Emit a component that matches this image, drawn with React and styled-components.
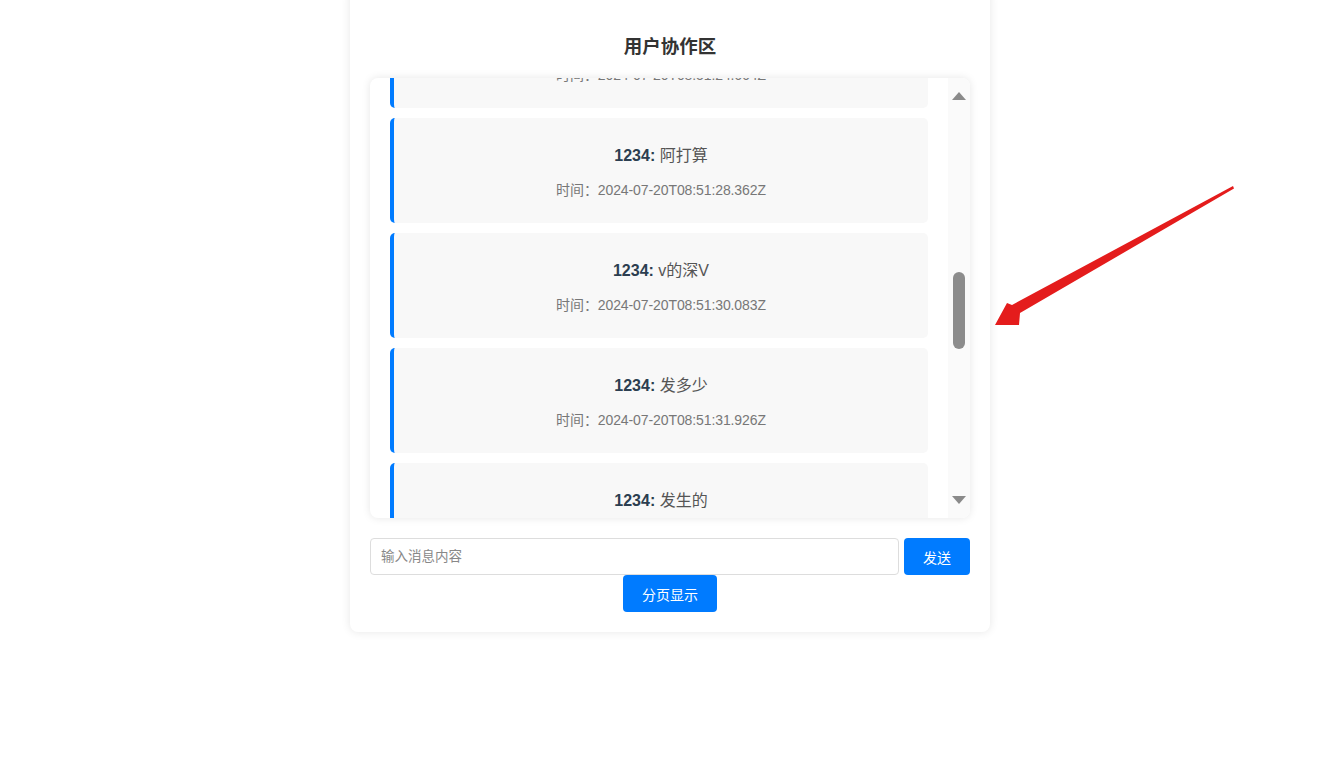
import React, { useLayoutEffect, useRef, useState } from 'react'
import styled, { createGlobalStyle } from 'styled-components'

const messages = [
  { user: '1234', text: '你好', time: '2024-07-20T08:50:41.118Z' },
  { user: '1234', text: '测试一下', time: '2024-07-20T08:50:47.532Z' },
  { user: '1234', text: '大家好', time: '2024-07-20T08:50:55.207Z' },
  { user: '1234', text: '收到', time: '2024-07-20T08:51:02.874Z' },
  { user: '1234', text: '的撒', time: '2024-07-20T08:51:10.391Z' },
  { user: '1234', text: '阿斯顿', time: '2024-07-20T08:51:16.045Z' },
  { user: '1234', text: '去问问', time: '2024-07-20T08:51:20.768Z' },
  { user: '1234', text: '撒旦', time: '2024-07-20T08:51:24.664Z' },
  { user: '1234', text: '阿打算', time: '2024-07-20T08:51:28.362Z' },
  { user: '1234', text: 'v的深V', time: '2024-07-20T08:51:30.083Z' },
  { user: '1234', text: '发多少', time: '2024-07-20T08:51:31.926Z' },
  { user: '1234', text: '发生的', time: '2024-07-20T08:51:33.517Z' },
  { user: '1234', text: '规范', time: '2024-07-20T08:51:35.240Z' },
  { user: '1234', text: '好几个', time: '2024-07-20T08:51:37.009Z' },
  { user: '1234', text: '看看', time: '2024-07-20T08:51:38.812Z' },
  { user: '1234', text: '而我却', time: '2024-07-20T08:51:40.455Z' },
  { user: '1234', text: '热热', time: '2024-07-20T08:51:42.193Z' },
  { user: '1234', text: '完成', time: '2024-07-20T08:51:44.730Z' },
]

const TRACK = 368

const App = () => {
  const listRef = useRef(null)
  const [thumb, setThumb] = useState({ top: 0, height: TRACK })

  const update = () => {
    const el = listRef.current
    if (!el) return
    const height = Math.max(30, (TRACK * el.clientHeight) / el.scrollHeight)
    const max = el.scrollHeight - el.clientHeight
    const top = max > 0 ? ((TRACK - height) * el.scrollTop) / max : 0
    setThumb({ top, height })
  }

  useLayoutEffect(() => {
    if (listRef.current) listRef.current.scrollTop = 900
    update()
  }, [])

  return (
    <>
      <GlobalStyle />
      <Page>
        <Card>
          <Title>用户协作区</Title>
          <ListFrame>
            <MessageList ref={listRef} onScroll={update}>
              {messages.map((m, i) => (
                <Message key={i}>
                  <MessageText>
                    <strong>{m.user}:</strong> {m.text}
                  </MessageText>
                  <MessageTime>时间：{m.time}</MessageTime>
                </Message>
              ))}
            </MessageList>
            <ScrollBar>
              <ScrollArrow>
                <svg width="14" height="8" viewBox="0 0 14 8">
                  <polygon points="7,0 14,8 0,8" fill="#8a8a8a" />
                </svg>
              </ScrollArrow>
              <ScrollTrack>
                <ScrollThumb style={{ top: thumb.top, height: thumb.height }} />
              </ScrollTrack>
              <ScrollArrow>
                <svg width="14" height="8" viewBox="0 0 14 8">
                  <polygon points="0,0 14,0 7,8" fill="#8a8a8a" />
                </svg>
              </ScrollArrow>
            </ScrollBar>
          </ListFrame>
          <InputRow>
            <MessageInput placeholder="输入消息内容" />
            <Button>发送</Button>
          </InputRow>
          <PagerRow>
            <Button>分页显示</Button>
          </PagerRow>
        </Card>
        <Annotation viewBox="0 0 260 160" width="260" height="160">
          <polygon
            fill="#e41c1c"
            points="5,145 17,123 22,125 243,6 244,8.5 30,133 29,145"
          />
        </Annotation>
      </Page>
    </>
  )
}

const GlobalStyle = createGlobalStyle`
  body {
    margin: 0;
    background: #ffffff;
    font-family: "Liberation Sans", "Noto Sans CJK SC", sans-serif;
  }
`

const Page = styled.div`
  position: relative;
  display: flex;
  justify-content: center;
  padding-left: 16px;
  min-height: 772px;
  overflow: hidden;
`

const Card = styled.div`
  box-sizing: border-box;
  width: 640px;
  height: 642px;
  margin-top: -10px;
  padding: 20px;
  background: #ffffff;
  border-radius: 8px;
  box-shadow: 0 0 10px rgba(0, 0, 0, 0.1);
`

const Title = styled.h3`
  margin: 25px 0 19px;
  line-height: 24px;
  font-size: 18.5px;
  font-weight: bold;
  color: #333333;
  text-align: center;
`

const ListFrame = styled.div`
  display: flex;
  height: 440px;
  background: #ffffff;
  border-radius: 8px;
  box-shadow: 0 0 8px rgba(0, 0, 0, 0.1);
  overflow: hidden;
`

const MessageList = styled.div`
  flex: 1;
  box-sizing: border-box;
  padding: 20px;
  overflow-y: auto;
  scrollbar-width: none;

  &::-webkit-scrollbar {
    display: none;
  }
`

const ScrollBar = styled.div`
  display: flex;
  flex-direction: column;
  width: 22px;
  background: #fafafa;
`

const ScrollArrow = styled.div`
  display: flex;
  align-items: center;
  justify-content: center;
  height: 36px;
  flex-shrink: 0;
`

const ScrollTrack = styled.div`
  position: relative;
  flex: 1;
`

const ScrollThumb = styled.div`
  position: absolute;
  left: 5px;
  right: 5px;
  border-radius: 6px;
  background: #8c8c8c;
`

const Message = styled.div`
  box-sizing: border-box;
  height: 105px;
  margin-bottom: 10px;
  padding: 28px 15px 0;
  background: #f8f8f8;
  border-left: 4px solid #007bff;
  border-radius: 5px;
  text-align: center;

  &:last-child {
    margin-bottom: 0;
  }
`

const MessageText = styled.p`
  margin: 0 0 14px;
  line-height: 20px;
  font-size: 16px;
  color: #555555;

  strong {
    color: #2c3e50;
  }
`

const MessageTime = styled.p`
  margin: 0;
  line-height: 20px;
  font-size: 14px;
  letter-spacing: -0.1px;
  color: #777777;
`

const InputRow = styled.div`
  display: flex;
  gap: 5px;
  margin-top: 20px;
`

const MessageInput = styled.input`
  flex: 1;
  box-sizing: border-box;
  height: 37px;
  padding: 0 10px;
  border: 1px solid #dddddd;
  border-radius: 4px;
  font-family: inherit;
  font-size: 13.5px;
  outline: none;

  &::placeholder {
    color: #888888;
  }
`

const Button = styled.button`
  box-sizing: border-box;
  height: 37px;
  padding: 0 19px;
  border: none;
  border-radius: 4px;
  background: #007bff;
  color: #ffffff;
  font-family: inherit;
  font-size: 14px;
  cursor: pointer;
`

const PagerRow = styled.div`
  display: flex;
  justify-content: center;
`

const Annotation = styled.svg`
  position: absolute;
  left: 990px;
  top: 180px;
`

export default App
